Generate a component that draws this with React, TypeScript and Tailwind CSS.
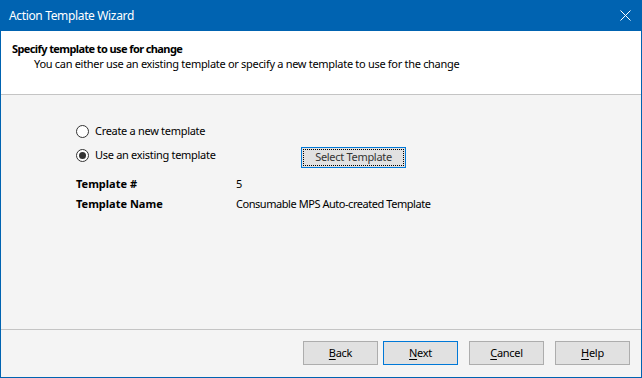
import React from 'react';

const font = { fontFamily: '"Noto Sans", "Liberation Sans", sans-serif' };

function Radio({ checked }: { checked?: boolean }) {
  return (
    <span className="w-[13px] h-[13px] rounded-full border border-[#333333] bg-white flex items-center justify-center shrink-0">
      {checked && <span className="w-[7px] h-[7px] rounded-full bg-[#333333]" />}
    </span>
  );
}

function WizardButton({ label, focused, className }: { label: string; focused?: boolean; className?: string }) {
  return (
    <button
      className={
        'w-[75px] h-[24px] bg-[#e1e1e1] border text-[11px] tracking-[-0.3px] text-black flex items-center justify-center ' +
        (focused ? 'border-[#0078d7] ' : 'border-[#adadad] ') +
        (className ?? '')
      }
    >
      <span>
        <span className="underline underline-offset-2">{label[0]}</span>
        {label.slice(1)}
      </span>
    </button>
  );
}

export default function App() {
  return (
    <div
      className="w-[642px] h-[378px] flex flex-col border-x border-b border-[#0063b1] bg-[#f4f4f4] text-black"
      style={font}
    >
      {/* Title bar */}
      <div className="h-[31px] shrink-0 bg-[#0063b1] flex items-center justify-between pl-[8px] pr-[10px] text-white">
        <span className="text-[12px] tracking-[-0.35px]">Action Template Wizard</span>
        <svg width="11" height="11" viewBox="0 0 11 11">
          <path d="M0.5 0.5L10.5 10.5M10.5 0.5L0.5 10.5" stroke="white" strokeWidth="1" />
        </svg>
      </div>

      {/* Header */}
      <div className="h-[64px] shrink-0 bg-white border-b border-[#c4c4c4] pl-[11px] pt-[10px] leading-[15px] text-[11px]">
        <div className="font-bold tracking-[-0.6px]">Specify template to use for change</div>
        <div className="pl-[22px] tracking-[-0.3px]">
          You can either use an existing template or specify a new template to use for the change
        </div>
      </div>

      {/* Body */}
      <div className="flex-1 pl-[75px] pt-[24px] text-[11px] tracking-[-0.3px]">
        <div className="h-[24px] flex items-center gap-[6px]">
          <Radio />
          <span>Create a new template</span>
        </div>
        <div className="flex items-start">
          <div className="w-[225px] h-[24px] flex items-center gap-[6px]">
            <Radio checked />
            <span>Use an existing template</span>
          </div>
          <button className="mt-[4px] w-[105px] h-[21px] bg-[#e1e1e1] border border-[#0078d7] p-[1px]">
            <span className="w-full h-full flex items-center justify-center border border-dotted border-black text-[11px] text-[#333333]">
              Select Template
            </span>
          </button>
        </div>
        <div className="mt-[6px]">
          <div className="h-[20px] flex items-center">
            <span className="w-[160px] font-bold tracking-normal">Template #</span>
            <span>5</span>
          </div>
          <div className="h-[20px] flex items-center">
            <span className="w-[160px] font-bold tracking-normal">Template Name</span>
            <span className="tracking-[-0.45px]">Consumable MPS Auto-created Template</span>
          </div>
        </div>
      </div>

      {/* Footer */}
      <div className="h-[48px] shrink-0 border-t border-[#c4c4c4] flex items-start pt-[11px] pl-[302px]">
        <WizardButton label="Back" />
        <WizardButton label="Next" focused className="ml-[5px]" />
        <WizardButton label="Cancel" className="ml-[11px]" />
        <WizardButton label="Help" className="ml-[11px]" />
      </div>
    </div>
  );
}
